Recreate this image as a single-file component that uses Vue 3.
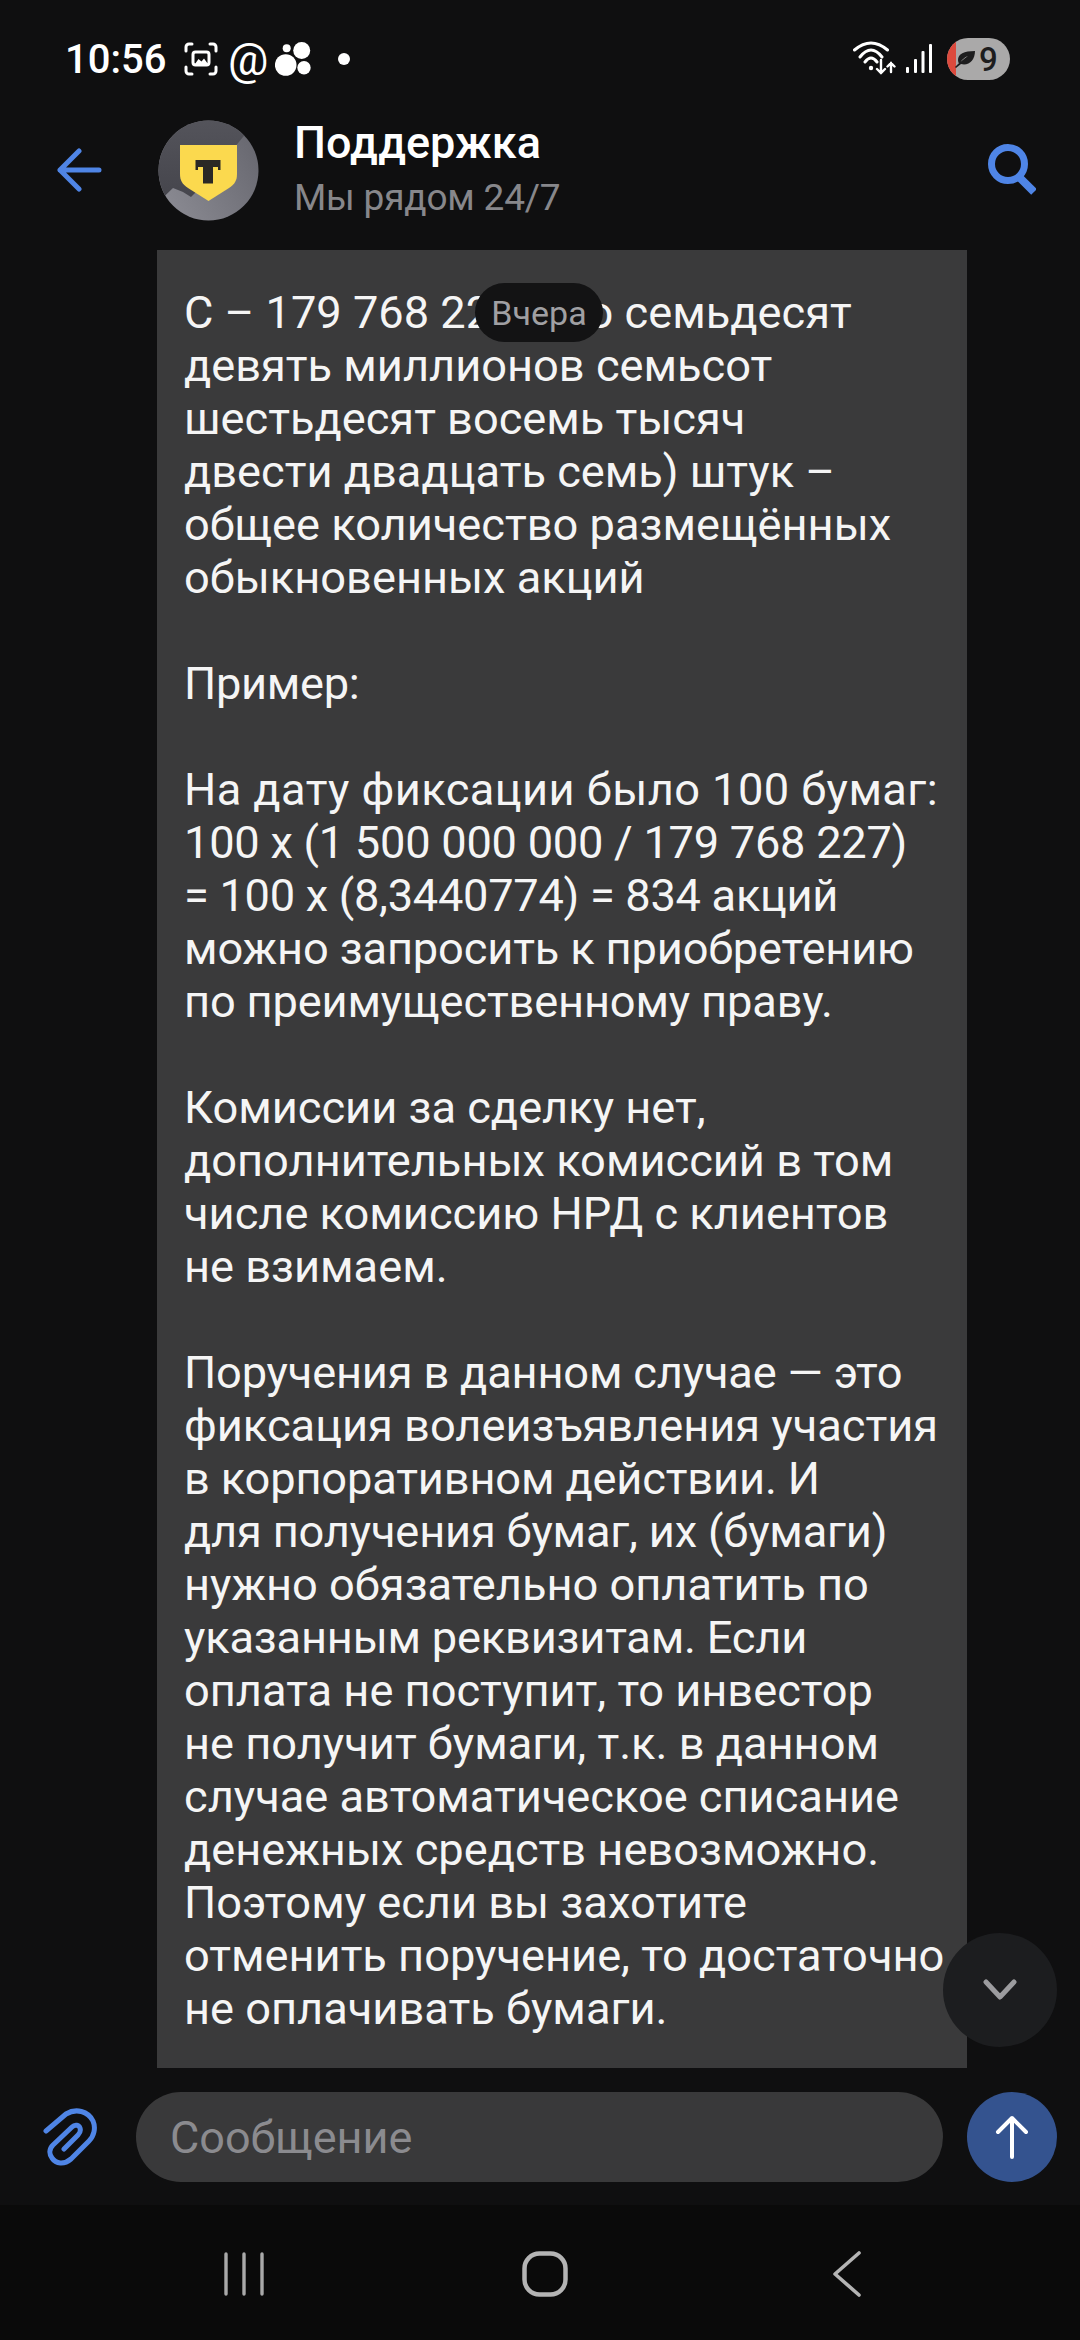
<script setup>
const lines = [
  { t: 'С – 179 768 227 (сто семьдесят' },
  { t: 'девять миллионов семьсот' },
  { t: 'шестьдесят восемь тысяч' },
  { t: 'двести двадцать семь) штук –' },
  { t: 'общее количество размещённых' },
  { t: 'обыкновенных акций' },
  { t: '' },
  { t: 'Пример:', k: -0.3 },
  { t: '' },
  { t: 'На дату фиксации было 100 бумаг:', k: 0.43 },
  { t: '100 х (1 500 000 000 / 179 768 227)', k: -0.25 },
  { t: '= 100 х (8,3440774) = 834 акций', k: -0.28 },
  { t: 'можно запросить к приобретению', k: -0.14 },
  { t: 'по преимущественному праву.', k: -0.15 },
  { t: '' },
  { t: 'Комиссии за сделку нет,' },
  { t: 'дополнительных комиссий в том' },
  { t: 'числе комиссию НРД с клиентов' },
  { t: 'не взимаем.' },
  { t: '' },
  { t: 'Поручения в данном случае — это', k: -0.18 },
  { t: 'фиксация волеизъявления участия' },
  { t: 'в корпоративном действии. И', k: -0.15 },
  { t: 'для получения бумаг, их (бумаги)', k: -0.18 },
  { t: 'нужно обязательно оплатить по' },
  { t: 'указанным реквизитам. Если', k: -0.2 },
  { t: 'оплата не поступит, то инвестор' },
  { t: 'не получит бумаги, т.к. в данном' },
  { t: 'случае автоматическое списание' },
  { t: 'денежных средств невозможно.' },
  { t: 'Поэтому если вы захотите' },
  { t: 'отменить поручение, то достаточно' },
  { t: 'не оплачивать бумаги.' }
]
</script>

<template>
  <div class="page">
    <div class="status">
      <div class="status-left">
        <span class="time">10:56</span>
        <svg class="ic-shot" width="34" height="34" viewBox="0 0 34 34" fill="none" stroke="#fff" stroke-width="3" stroke-linecap="round">
          <path d="M8 2H5a3 3 0 0 0-3 3v4M26 2h3a3 3 0 0 1 3 3v4M8 32H5a3 3 0 0 1-3-3v-4M26 32h3a3 3 0 0 0 3-3v-4" />
          <rect x="9" y="10" width="16" height="13" rx="2.500" />
          <path d="M11 22l3.500-5 3 2.500 2.500-3 4 5.500z" fill="#fff" stroke="none" />
        </svg>
        <span class="at">@</span>
        <svg class="dots" width="36" height="34" viewBox="0 0 36 34" fill="#fff">
          <circle cx="26.700" cy="8.500" r="8.500" />
          <circle cx="10.700" cy="23" r="10.800" />
          <circle cx="29" cy="25.700" r="6.700" />
          <circle cx="11.700" cy="6.300" r="4" />
        </svg>
        <span class="dot"></span>
      </div>
      <div class="status-right">
        <svg width="44" height="36" viewBox="0 0 44 36" fill="none" stroke="#fff" stroke-width="3" stroke-linecap="round">
          <path d="M2.500 9Q19 -5 35.500 9M8 16Q19 2 30 16M13 21Q19 13 25 21" />
          <circle cx="19" cy="27" r="2.200" fill="#fff" stroke="none" />
          <path d="M29 19v13m-4-4l4 4 4-4M39 31V22m-3.500 3.500l3.500-3.500 3.500 3.500" stroke-width="2.400" />
        </svg>
        <svg class="signal" width="26" height="30" viewBox="0 0 26 30" fill="#fff">
          <rect x="0" y="23" width="3" height="6" rx="1" />
          <rect x="8" y="15" width="3" height="14" rx="1" />
          <rect x="15.500" y="7" width="3" height="22" rx="1" />
          <rect x="23" y="0" width="3" height="29" rx="1" />
        </svg>
        <div class="battery">
          <span class="battery-low"></span>
          <svg class="leaf" width="22" height="19" viewBox="0 0 22 19" fill="#1d1d1e">
            <path d="M21 1C10 1 4 4 4 10c0 1.500.5 3 1.500 4C7 10 11 7 14 6 10 9 6 12 1 17l1 1 5-4c8 2 14-4 14-13z" />
          </svg>
          <span class="battery-num">9</span>
        </div>
      </div>
    </div>

    <header class="header">
      <svg class="back" width="45" height="44" viewBox="0 0 45 44" fill="none" stroke="#4f85e6" stroke-width="5" stroke-linecap="round" stroke-linejoin="round">
        <path d="M42 22H3M22 3L3 22l19 19" />
      </svg>
      <svg class="avatar" width="101" height="101" viewBox="0 0 101 101">
        <defs>
          <clipPath id="avatar-clip"><circle cx="50.500" cy="50.500" r="50" /></clipPath>
          <linearGradient id="avatar-grad" x1="0" y1="1" x2="1" y2="0.400">
            <stop offset="0" stop-color="#8e8e96" />
            <stop offset="1" stop-color="#6a6a72" />
          </linearGradient>
          <linearGradient id="avatar-dark" x1="0" y1="0" x2="0" y2="1">
            <stop offset="0" stop-color="#54545b" />
            <stop offset="1" stop-color="#44444b" />
          </linearGradient>
        </defs>
        <circle cx="50.500" cy="50.500" r="50" fill="url(#avatar-grad)" />
        <path clip-path="url(#avatar-clip)" d="M0 0H101L85 17 50 60 33 77 25 72 15 68 6.700 76 0 85z" fill="url(#avatar-dark)" />
        <path d="M22 25H79V54c0 6-2 10-8 14L50.500 81 30 68c-6-4-8-8-8-14z" fill="#fbd94e" />
        <path d="M37.500 40H62.500V50H60V47H55V63.500H45V47H40V50H37.500z" fill="#2a2825" />
      </svg>
      <div class="title-col">
        <div class="title">Поддержка</div>
        <div class="subtitle">Мы рядом 24/7</div>
      </div>
      <svg class="search" width="48" height="52" viewBox="0 0 48 52" fill="none" stroke="#4f85e6" stroke-width="7">
        <circle cx="20" cy="20" r="16.500" />
        <path d="M31 33l15 15" stroke-width="8" />
      </svg>
    </header>

    <main class="chat">
      <div class="bubble">
        <div
          v-for="(line, i) in lines"
          :key="i"
          class="line"
          :style="line.k ? { letterSpacing: line.k + 'px' } : null"
        >{{ line.t }}</div>
      </div>
      <div class="date-pill">Вчера</div>
      <div class="scroll-btn">
        <svg width="34" height="22" viewBox="0 0 34 22" fill="none" stroke="#9c9c9f" stroke-width="5" stroke-linecap="round" stroke-linejoin="round">
          <path d="M3 3l14 15L31 3" />
        </svg>
      </div>
    </main>

    <div class="composer">
      <svg class="clip" width="54" height="58" viewBox="0 0 54 58" fill="none" stroke="#4f85e6" stroke-width="5" stroke-linecap="round" stroke-linejoin="round">
        <path d="M3 23L23 6C33 0 45 3 50 13C53 20 51 28 46 33L28 51C21 57 13 56 9 50C6 46 6 41 10 37L29 19C32 16 36 17 37 20C38 23 37 25 35 27L21 41" />
      </svg>
      <div class="input">Сообщение</div>
      <div class="send">
        <svg width="34" height="44" viewBox="0 0 34 44" fill="none" stroke="#fff" stroke-width="4" stroke-linecap="round" stroke-linejoin="round">
          <path d="M17 42V3M3 17L17 3l14 14" />
        </svg>
      </div>
    </div>

    <nav class="nav">
      <svg width="40" height="44" viewBox="0 0 40 44" fill="none" stroke="#a9a9a9" stroke-width="3.400" stroke-linecap="round">
        <path d="M2 2v40M20 2v40M38 2v40" />
      </svg>
      <svg class="nav-home" width="46" height="46" viewBox="0 0 46 46" fill="none" stroke="#b4b4b4" stroke-width="4.500">
        <rect x="2.500" y="2.500" width="41" height="41" rx="15" />
      </svg>
      <svg class="nav-back" width="28" height="46" viewBox="0 0 28 46" fill="none" stroke="#b4b4b4" stroke-width="3.600" stroke-linecap="round" stroke-linejoin="round">
        <path d="M26 2L2 23l24 21" />
      </svg>
    </nav>
  </div>
</template>

<style scoped>
.page {
  width: 1080px;
  height: 2340px;
  display: flex;
  flex-direction: column;
  background: #0f0f10;
  color: #fff;
  font-family: Roboto, "Noto Sans", sans-serif;
  overflow: hidden;
}
.status {
  height: 100px;
  flex: none;
  display: flex;
  justify-content: space-between;
  align-items: center;
  padding: 18px 70px 0 65px;
  box-sizing: border-box;
}
.status-left, .status-right {
  display: flex;
  align-items: center;
}
.time {
  font-size: 40px;
  font-weight: 500;
  width: 119px;
}
.at {
  font-size: 45px;
  line-height: 1;
  width: 40px;
  margin-left: 10px;
  text-align: center;
}
.dots {
  margin-left: 7px;
}
.dot {
  width: 12px;
  height: 12px;
  border-radius: 50%;
  background: #fff;
  margin-left: 27px;
}
.status-right svg { flex: none; }
.signal { margin-left: 10px; }
.battery {
  width: 63px;
  height: 42px;
  margin-left: 15px;
  border-radius: 21px;
  background: #aaa9a9;
  position: relative;
  overflow: hidden;
  display: flex;
  align-items: center;
}
.battery-low {
  position: absolute;
  left: 0;
  top: 0;
  bottom: 0;
  width: 9px;
  background: #dc4a3d;
}
.leaf {
  position: relative;
  margin-left: 7px;
  flex: none;
}
.battery-num {
  position: relative;
  margin-left: 3px;
  color: #1d1d1e;
  font-size: 33px;
  font-weight: 500;
}
.header {
  height: 150px;
  flex: none;
  display: flex;
  align-items: center;
  padding: 0 44px 10px 57px;
  box-sizing: border-box;
}
.back { flex: none; }
.avatar {
  margin-left: 56px;
  flex: none;
}
.title-col {
  margin-left: 35px;
  flex: 1;
}
.title {
  font-size: 45px;
  font-weight: 500;
  line-height: 52px;
  margin-top: -3px;
}
.subtitle {
  font-size: 37px;
  line-height: 44px;
  margin-top: 7px;
  letter-spacing: -0.2px;
  color: #87878b;
}
.chat {
  flex: 1;
  min-height: 0;
  position: relative;
  overflow: hidden;
  padding-left: 157px;
}
.bubble {
  width: 810px;
  height: 100%;
  background: #3a3a3b;
  box-sizing: border-box;
  padding: 36px 0 0 27px;
  font-size: 45.200px;
  line-height: 53px;
  color: #f5f5f5;
  overflow: hidden;
}
.line {
  height: 53px;
  white-space: nowrap;
}
.date-pill {
  position: absolute;
  left: 475px;
  top: 33px;
  width: 128px;
  height: 59px;
  border-radius: 30px;
  background: #131314;
  color: #a0a0a3;
  font-size: 34px;
  display: flex;
  align-items: center;
  justify-content: center;
}
.scroll-btn {
  position: absolute;
  left: 943px;
  top: 1683px;
  width: 114px;
  height: 114px;
  border-radius: 50%;
  background: #1c1d1f;
  display: flex;
  align-items: center;
  justify-content: center;
}
.composer {
  height: 137px;
  flex: none;
  display: flex;
  align-items: center;
  padding: 0 23px 0 43px;
  box-sizing: border-box;
}
.clip { flex: none; }
.input {
  margin-left: 39px;
  width: 807px;
  height: 90px;
  border-radius: 45px;
  background: #39393a;
  color: #8b8b8f;
  font-size: 45px;
  display: flex;
  align-items: center;
  padding: 2px 0 0 34px;
  box-sizing: border-box;
}
.send {
  margin-left: 24px;
  width: 90px;
  height: 90px;
  border-radius: 50%;
  background: #34538f;
  display: flex;
  align-items: center;
  justify-content: center;
  flex: none;
}
.nav {
  height: 135px;
  flex: none;
  background: #0a0a0a;
  display: flex;
  align-items: center;
  padding: 3px 0 0 224px;
  box-sizing: border-box;
}
.nav-home { margin-left: 258px; }
.nav-back { margin-left: 265px; }
</style>
